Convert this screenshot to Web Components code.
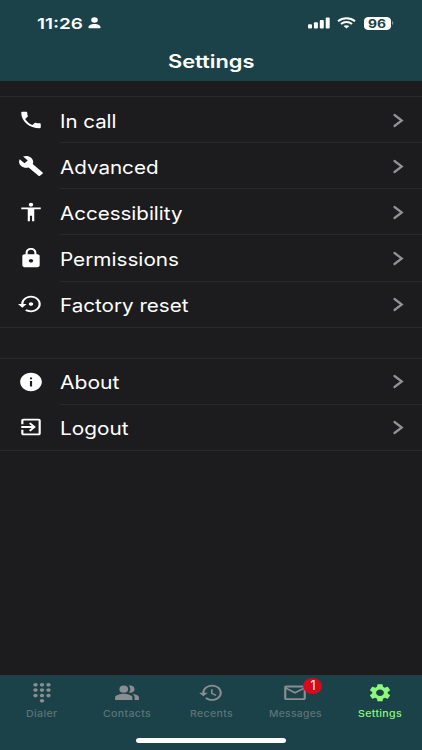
<!DOCTYPE html>
<html lang="en">
<head>
<meta charset="utf-8">
<title>Settings</title>
<style>
  html, body {
    margin: 0;
    height: 100%;
  }

  body {
    background: #1c1c1e;
    color: #fff;
    font-family: Inter, "Liberation Sans", sans-serif;
    overflow: hidden;
  }
</style>
</head>
<body>
<settings-app></settings-app>

<script>
// 24x24 shapes, stretched to whatever box the icon gets
const ICONS = {
  phone: '<path d="M20 15.5c-1.25 0-2.45-.2-3.57-.57-.35-.11-.74-.03-1.02.24l-2.2 2.2c-2.83-1.44-5.15-3.75-6.59-6.59l2.2-2.21c.28-.26.36-.65.25-1C8.7 6.45 8.5 5.25 8.5 4c0-.55-.45-1-1-1H4c-.55 0-1 .45-1 1 0 9.39 7.61 17 17 17 .55 0 1-.45 1-1v-3.5c0-.55-.45-1-1-1z"/>',
  wrench: '<path d="M22.7 19l-9.1-9.1c.9-2.3.4-5-1.5-6.9-2-2-5-2.4-7.4-1.3L9 6 6 9 1.6 4.7C.4 7.1.9 10.1 2.9 12.1c1.9 1.9 4.6 2.4 6.9 1.5l9.1 9.1c.4.4 1 .4 1.4 0l2.3-2.3c.5-.4.5-1.1.1-1.4z"/>',
  person: '<path d="M12 2c1.1 0 2 .9 2 2s-.9 2-2 2-2-.9-2-2 .9-2 2-2zm9 7h-6v13h-2v-6h-2v6H9V9H3V7h18v2z"/>',
  lock: '<path d="M18 8h-1V6c0-2.76-2.24-5-5-5S7 3.24 7 6v2H6c-1.1 0-2 .9-2 2v10c0 1.1.9 2 2 2h12c1.1 0 2-.9 2-2V10c0-1.1-.9-2-2-2zm-6 9c-1.1 0-2-.9-2-2s.9-2 2-2 2 .9 2 2-.9 2-2 2zm3.1-9H8.9V6c0-1.71 1.39-3.1 3.1-3.1s3.1 1.39 3.1 3.1v2z"/>',
  restore: '<path d="M14 12c0-1.1-.9-2-2-2s-2 .9-2 2 .9 2 2 2 2-.9 2-2zm-2-9c-4.97 0-9 4.03-9 9H0l4 4 4-4H5c0-3.87 3.13-7 7-7s7 3.13 7 7-3.13 7-7 7c-1.51 0-2.91-.49-4.06-1.3l-1.42 1.44C8.04 20.3 9.94 21 12 21c4.97 0 9-4.03 9-9s-4.03-9-9-9z"/>',
  info: '<path d="M12 2C6.48 2 2 6.48 2 12s4.48 10 10 10 10-4.48 10-10S17.52 2 12 2zm1 15h-2v-6h2v6zm0-8h-2V7h2v2z"/>',
  exit: '<path d="M10.09 15.59L11.5 17l5-5-5-5-1.41 1.41L12.67 11H3v2h9.67l-2.58 2.59zM19 3H5c-1.11 0-2 .9-2 2v4h2V5h14v14H5v-4H3v4c0 1.1.89 2 2 2h14c1.1 0 2-.9 2-2V5c0-1.1-.9-2-2-2z"/>',
  dialpad: '<path d="M12 19c-1.1 0-2 .9-2 2s.9 2 2 2 2-.9 2-2-.9-2-2-2zM6 1c-1.1 0-2 .9-2 2s.9 2 2 2 2-.9 2-2-.9-2-2-2zm0 6c-1.1 0-2 .9-2 2s.9 2 2 2 2-.9 2-2-.9-2-2-2zm0 6c-1.1 0-2 .9-2 2s.9 2 2 2 2-.9 2-2-.9-2-2-2zm12-8c1.1 0 2-.9 2-2s-.9-2-2-2-2 .9-2 2 .9 2 2 2zm-6 8c-1.1 0-2 .9-2 2s.9 2 2 2 2-.9 2-2-.9-2-2-2zm6 0c-1.1 0-2 .9-2 2s.9 2 2 2 2-.9 2-2-.9-2-2-2zm0-6c-1.1 0-2 .9-2 2s.9 2 2 2 2-.9 2-2-.9-2-2-2zm-6 0c-1.1 0-2 .9-2 2s.9 2 2 2 2-.9 2-2-.9-2-2-2zm0-6c-1.1 0-2 .9-2 2s.9 2 2 2 2-.9 2-2-.9-2-2-2z"/>',
  people: '<path d="M16.67 13.13C18.04 14.06 19 15.32 19 17v3h4v-3c0-2.18-3.57-3.47-6.33-3.87z"/><circle cx="9" cy="8" r="4"/><path d="M15 12c2.21 0 4-1.79 4-4s-1.79-4-4-4c-.47 0-.91.1-1.33.24C14.5 5.27 15 6.58 15 8s-.5 2.73-1.33 3.76c.42.14.86.24 1.33.24zM9 13c-2.67 0-8 1.34-8 4v3h16v-3c0-2.66-5.33-4-8-4z"/>',
  history: '<path d="M13 3c-4.97 0-9 4.03-9 9H1l3.89 3.89.07.14L9 12H6c0-3.87 3.13-7 7-7s7 3.13 7 7-3.13 7-7 7c-1.93 0-3.68-.79-4.94-2.06l-1.42 1.42C8.27 19.99 10.51 21 13 21c4.97 0 9-4.03 9-9s-4.03-9-9-9zm-1 5v5l4.28 2.54.72-1.21-3.5-2.08V8H12z"/>',
  mail: '<path d="M22 6c0-1.1-.9-2-2-2H4c-1.1 0-2 .9-2 2v12c0 1.1.9 2 2 2h16c1.1 0 2-.9 2-2V6zm-2 0l-8 5-8-5h16zm0 12H4V8l8 5 8-5v10z"/>',
  gear: '<path d="M19.14 12.94c.04-.3.06-.61.06-.94 0-.32-.02-.64-.07-.94l2.03-1.58c.18-.14.23-.41.12-.61l-1.92-3.32c-.12-.22-.37-.29-.59-.22l-2.39.96c-.5-.38-1.03-.7-1.62-.94l-.36-2.54c-.04-.24-.24-.41-.48-.41h-3.84c-.24 0-.43.17-.47.41l-.36 2.54c-.59.24-1.13.57-1.62.94l-2.39-.96c-.22-.08-.47 0-.59.22L2.74 8.87c-.12.21-.08.47.12.61l2.03 1.58c-.05.3-.09.63-.09.94s.02.64.07.94l-2.03 1.58c-.18.14-.23.41-.12.61l1.92 3.32c.12.22.37.29.59.22l2.39-.96c.5.38 1.03.7 1.62.94l.36 2.54c.05.24.24.41.48.41h3.84c.24 0 .44-.17.47-.41l.36-2.54c.59-.24 1.13-.56 1.62-.94l2.39.96c.22.08.47 0 .59-.22l1.92-3.32c.12-.22.07-.47-.12-.61l-2.01-1.58zM12 15.6c-1.98 0-3.6-1.62-3.6-3.6s1.62-3.6 3.6-3.6 3.6 1.62 3.6 3.6-1.62 3.6-3.6 3.6z"/>'
};

class AppIcon extends HTMLElement {
  constructor() {
    super();
    this.attachShadow({ mode: "open" });
  }

  connectedCallback() {
    const name = this.getAttribute("name");
    this.shadowRoot.innerHTML = `
      <style>
        :host {
          display: block;
          width: 26px;
          height: 21.5px;
        }

        svg {
          display: block;
          width: 100%;
          height: 100%;
          fill: currentColor;
        }
      </style>
      <svg viewBox="0 0 24 24" preserveAspectRatio="none">${ICONS[name] || ""}</svg>
    `;
  }
}

// One line of text, widened or narrowed to the given width
class WideText extends HTMLElement {
  constructor() {
    super();
    this.attachShadow({ mode: "open" });
  }

  connectedCallback() {
    const width = Number(this.getAttribute("width"));
    this.shadowRoot.innerHTML = `
      <style>
        :host {
          display: block;
          width: ${width}px;
          white-space: nowrap;
        }

        span {
          display: inline-block;
          transform-origin: 0 50%;
        }
      </style>
      <span>${this.getAttribute("text")}</span>
    `;
    const span = this.shadowRoot.querySelector("span");
    const scale = width / span.getBoundingClientRect().width;
    span.style.transform = `translateY(0.6px) scaleX(${scale})`;
  }
}

class StatusBar extends HTMLElement {
  constructor() {
    super();
    this.attachShadow({ mode: "open" });
  }

  connectedCallback() {
    this.shadowRoot.innerHTML = `
      <style>
        :host {
          display: flex;
          align-items: center;
          height: 20px;
          padding: 13px 28px 0 36.5px;
        }

        svg {
          display: block;
          fill: #fff;
        }

        .time {
          font-size: 15.2px;
          line-height: 20px;
          font-weight: 600;
        }

        .user {
          margin-left: 5px;
        }

        .signal {
          margin-left: auto;
        }

        .wifi {
          margin-left: 7px;
        }

        .battery {
          display: flex;
          align-items: center;
          justify-content: center;
          margin-left: 7.5px;
          width: 27.5px;
          height: 13px;
          border-radius: 4.5px / 3.8px;
          background: #fff;
          color: #1b4248;
          font-size: 11.6px;
          line-height: 13px;
          font-weight: 700;
        }
      </style>

      <wide-text class="time" text="11:26" width="46"></wide-text>
      <svg class="user" width="13" height="12" viewBox="0 0 13 12">
        <ellipse cx="6.5" cy="3" rx="3.3" ry="2.8"/>
        <path d="M.4 10.6C.4 8.2 3 6.9 6.5 6.9s6.1 1.3 6.1 3.7c0 .5-.3.7-.8.7H1.2c-.5 0-.8-.2-.8-.7z"/>
      </svg>

      <svg class="signal" width="22" height="12" viewBox="0 0 22 12">
        <rect x="0" y="7.3" width="4" height="4.2" rx="1"/>
        <rect x="5.9" y="5.3" width="4" height="6.2" rx="1"/>
        <rect x="11.8" y="3" width="4" height="8.5" rx="1"/>
        <rect x="17.7" y=".4" width="4" height="11.1" rx="1"/>
      </svg>
      <svg class="wifi" width="19" height="12" viewBox="0 0 19 12">
        <path d="M9.5 11.6L6.6 9.1c1.6-1.3 4.2-1.3 5.8 0z"/>
        <g fill="none" stroke="#fff" stroke-width="2">
          <path d="M1 4.2c4.7-4.1 12.3-4.1 17 0"/>
          <path d="M4 7.1c3-2.7 8-2.7 11 0"/>
        </g>
      </svg>
      <div class="battery"><wide-text text="96" width="18"></wide-text></div>
      <svg width="3" height="6" viewBox="0 0 3 6">
        <path fill="#849da0" d="M1 1c1.7.6 1.7 3.4 0 4z"/>
      </svg>
    `;
  }
}

class SettingsGroup extends HTMLElement {
  constructor() {
    super();
    this.attachShadow({ mode: "open" });
    this.shadowRoot.innerHTML = `
      <style>
        :host {
          display: block;
          border-top: 1px solid #29292b;
          border-bottom: 1px solid #29292b;
        }
      </style>
      <slot></slot>
    `;
  }
}

class SettingsRow extends HTMLElement {
  constructor() {
    super();
    this.attachShadow({ mode: "open" });
  }

  connectedCallback() {
    this.shadowRoot.innerHTML = `
      <style>
        :host {
          display: flex;
          align-items: center;
          height: 46.15px;
          padding-left: 17.6px;
        }

        :host(:last-child) {
          height: 45.2px;
        }

        app-icon {
          width: 26px;
          height: 22px;
        }

        .body {
          display: flex;
          align-items: center;
          justify-content: space-between;
          flex: 1;
          height: 100%;
          box-sizing: border-box;
          margin-left: 16.4px;
          padding-right: 18px;
          border-bottom: 1px solid #29292b;
          font-size: 18.4px;
          line-height: 24px;
        }

        :host(:last-child) .body {
          border-bottom: 0;
        }

        svg {
          display: block;
          margin-top: 1px;
          fill: none;
          stroke: #929297;
          stroke-width: 2.2;
          stroke-linecap: round;
        }
      </style>
      <app-icon name="${this.getAttribute("icon")}"></app-icon>
      <div class="body">
        <wide-text text="${this.getAttribute("label")}" width="${this.getAttribute("label-width")}"></wide-text>
        <svg width="12" height="15" viewBox="0 0 12 15">
          <path d="M2.5 2l7.3 5.5L2.5 13"/>
        </svg>
      </div>
    `;
  }
}

class TabItem extends HTMLElement {
  constructor() {
    super();
    this.attachShadow({ mode: "open" });
  }

  connectedCallback() {
    const badge = this.getAttribute("badge");
    this.shadowRoot.innerHTML = `
      <style>
        :host {
          display: flex;
          flex-direction: column;
          align-items: center;
          flex: 1;
          padding-top: 6px;
          color: #5e7478;
        }

        app-icon {
          color: #8a8d91;
        }

        :host([active]),
        :host([active]) app-icon {
          color: #8cf97a;
        }

        .icon {
          position: relative;
        }

        .label {
          margin-top: 2px;
          font-size: 9.3px;
          line-height: 14px;
          font-weight: 500;
          letter-spacing: 0.3px;
        }

        .badge {
          position: absolute;
          left: 21px;
          top: -4px;
          display: flex;
          align-items: center;
          justify-content: center;
          width: 19px;
          height: 16px;
          border-radius: 50%;
          background: #d40a1e;
          color: #fff;
          font-size: 12.5px;
          line-height: 16px;
        }
      </style>
      <div class="icon">
        <app-icon name="${this.getAttribute("icon")}"></app-icon>
        ${badge ? `<div class="badge">${badge}</div>` : ""}
      </div>
      <wide-text class="label" text="${this.getAttribute("label")}" width="${this.getAttribute("label-width")}"></wide-text>
    `;
  }
}

class SettingsApp extends HTMLElement {
  constructor() {
    super();
    this.attachShadow({ mode: "open" });
  }

  connectedCallback() {
    this.shadowRoot.innerHTML = `
      <style>
        :host {
          display: flex;
          flex-direction: column;
          height: 750px;
          width: 422px;
        }

        header {
          height: 81px;
          background: #1b4248;
        }

        .title {
          margin: 15px auto 0;
          font-size: 18.2px;
          line-height: 24px;
          font-weight: 600;
        }

        main {
          display: flex;
          flex-direction: column;
          flex: 1;
          gap: 30px;
          padding-top: 15px;
        }

        footer {
          height: 74px;
          background: #1b4248;
          border-top: 1px solid #263c41;
        }

        nav {
          display: flex;
          height: 62px;
        }

        .home {
          width: 150px;
          height: 5px;
          margin: 0 auto;
          border-radius: 3px / 2.5px;
          background: #fff;
        }
      </style>

      <header>
        <status-bar></status-bar>
        <wide-text class="title" text="Settings" width="86.5"></wide-text>
      </header>

      <main>
        <settings-group>
          <settings-row icon="phone" label="In call" label-width="56.5"></settings-row>
          <settings-row icon="wrench" label="Advanced" label-width="98.5"></settings-row>
          <settings-row icon="person" label="Accessibility" label-width="122.5"></settings-row>
          <settings-row icon="lock" label="Permissions" label-width="119"></settings-row>
          <settings-row icon="restore" label="Factory reset" label-width="128.5"></settings-row>
        </settings-group>
        <settings-group>
          <settings-row icon="info" label="About" label-width="59.5"></settings-row>
          <settings-row icon="exit" label="Logout" label-width="68.5"></settings-row>
        </settings-group>
      </main>

      <footer>
        <nav>
          <tab-item icon="dialpad" label="Dialer" label-width="31.5"></tab-item>
          <tab-item icon="people" label="Contacts" label-width="48"></tab-item>
          <tab-item icon="history" label="Recents" label-width="43"></tab-item>
          <tab-item icon="mail" label="Messages" label-width="53"  badge="1"></tab-item>
          <tab-item icon="gear" label="Settings" label-width="44" active></tab-item>
        </nav>
        <div class="home"></div>
      </footer>
    `;
  }
}

customElements.define("app-icon", AppIcon);
customElements.define("wide-text", WideText);
customElements.define("status-bar", StatusBar);
customElements.define("settings-group", SettingsGroup);
customElements.define("settings-row", SettingsRow);
customElements.define("tab-item", TabItem);
customElements.define("settings-app", SettingsApp);
</script>
</body>
</html>
